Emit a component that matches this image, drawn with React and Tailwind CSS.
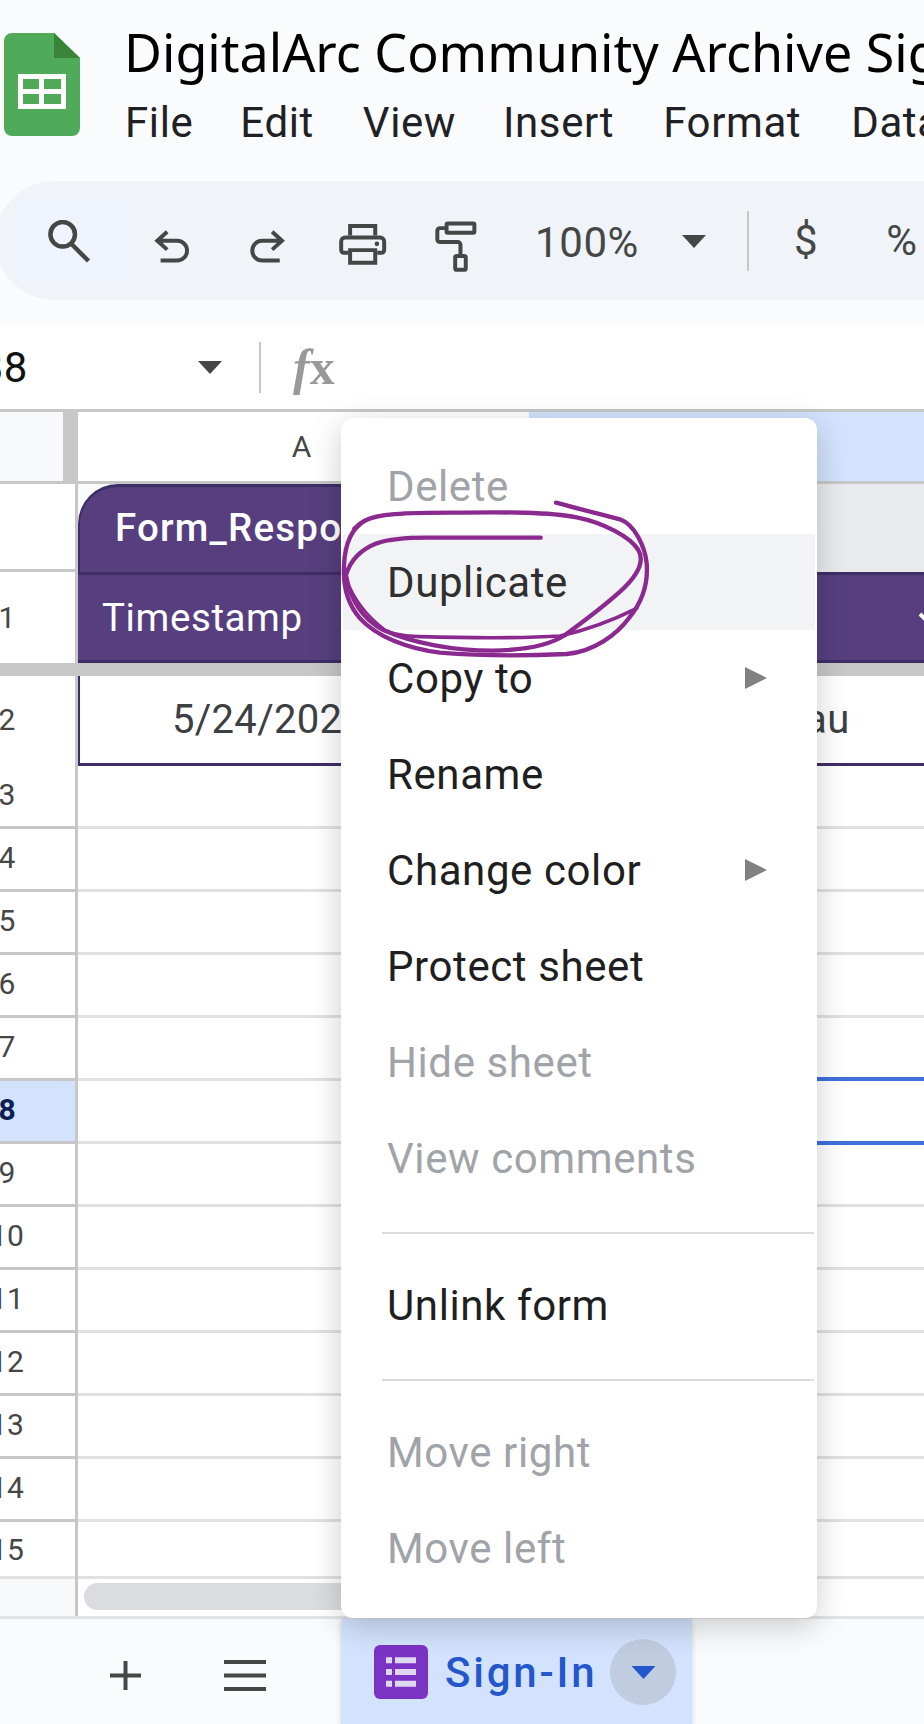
const menuItems = [
  { label: "Delete", off: true },
  { label: "Duplicate", hover: true },
  { label: "Copy to", sub: true },
  { label: "Rename" },
  { label: "Change color", sub: true },
  { label: "Protect sheet" },
  { label: "Hide sheet", off: true },
  { label: "View comments", off: true },
  { sep: true },
  { label: "Unlink form" },
  { sep: true },
  { label: "Move right", off: true },
  { label: "Move left", off: true },
];

const menus = [
  { label: "File", gap: "ml-0" },
  { label: "Edit", gap: "ml-[47px]" },
  { label: "View", gap: "ml-[49px]" },
  { label: "Insert", gap: "ml-[47px]" },
  { label: "Format", gap: "ml-[49px]" },
  { label: "Data", gap: "ml-[50px]" },
];

const rows = [3, 4, 5, 6, 7, 8, 9, 10, 11, 12, 13, 14];

const Caret = ({ className }) => (
  <svg viewBox="0 0 24 13" className={className}>
    <path d="M0 0H24L12 13Z" fill="currentColor" />
  </svg>
);

const SheetsLogo = () => (
  <svg viewBox="0 0 76 103" className="w-[76px] h-[103px] shrink-0 ml-[4px] mt-[2px]">
    <path d="M8 0H50L76 25V95a8 8 0 0 1-8 8H8a8 8 0 0 1-8-8V8a8 8 0 0 1 8-8Z" fill="#4fab5a" />
    <path d="M50 0L76 25H50Z" fill="#3a8439" />
    <path d="M14 41H62V76H14Z" fill="#fff" />
    <path d="M19 46H35V56H19ZM40 46H57V56H40ZM19 61H35V71H19ZM40 61H57V71H40Z" fill="#4fab5a" />
  </svg>
);

const SearchIcon = () => (
  <svg viewBox="0 0 44 44" className="w-[44px] h-[44px]" fill="none" stroke="#444746" strokeWidth="4.5">
    <circle cx="15.7" cy="14.3" r="12.3" />
    <path d="M24 23.5L41.5 41" />
  </svg>
);

const UndoIcon = () => (
  <svg viewBox="365 70 115 102" className="w-[38px] h-[34px]" fill="none" stroke="#444746" strokeWidth="12">
    <path d="M408 78L378 105L408 132M378 105H438A30 30 0 0 1 438 165H388" />
  </svg>
);

const RedoIcon = () => (
  <svg viewBox="655 70 115 102" className="w-[38px] h-[34px]" fill="none" stroke="#444746" strokeWidth="12">
    <path d="M725 78L755 105L725 132M755 105H695A30 30 0 0 0 695 165H748" />
  </svg>
);

const PrintIcon = () => (
  <svg viewBox="25 22 150 130" className="w-[50px] h-[43px]" fill="none" stroke="#444746" strokeWidth="12">
    <path d="M61 60V31H137V60" />
    <path d="M55 112H42a8 8 0 0 1-8-8V78a12 12 0 0 1 12-12H152a12 12 0 0 1 12 12V104a8 8 0 0 1-8 8H143" />
    <path d="M61 104H137V142H61Z" />
    <circle cx="142" cy="85" r="7" fill="#444746" stroke="none" />
  </svg>
);

const PaintIcon = () => (
  <svg viewBox="315 12 130 156" className="w-[43px] h-[52px]" fill="none" stroke="#444746" strokeWidth="12">
    <rect x="350" y="22" width="84" height="28" rx="3" />
    <path d="M350 36H330a8 8 0 0 0-8 8V70a8 8 0 0 0 8 8H384a8 8 0 0 1 8 8V118" />
    <rect x="376" y="120" width="32" height="42" rx="5" />
  </svg>
);

const FormIcon = () => (
  <svg viewBox="0 0 162 162" className="w-[54px] h-[54px] shrink-0">
    <rect width="162" height="162" rx="18" fill="#7b33c4" />
    <path d="M36 37H54V55H36ZM63 37H126V55H63ZM36 72H54V90H36ZM63 72H126V90H63ZM36 107H54V125H36ZM63 107H126V125H63Z" fill="#dfd6f2" />
  </svg>
);

const Scribble = () => (
  <svg viewBox="0 0 1020 600" className="absolute left-[320px] top-[480px] w-[340px] h-[200px]" fill="none" stroke="#8b2a8e" strokeWidth="13" strokeLinecap="round" strokeLinejoin="round">
    <path d="M708 68C770 85 850 105 900 118C945 135 975 200 980 250C985 310 970 360 930 410C890 465 820 515 740 522C620 528 480 528 360 518C260 505 170 470 120 415C85 375 68 320 72 255C75 190 95 145 135 122C170 102 250 98 400 98C560 96 690 96 770 112C850 128 930 170 955 210C975 245 950 290 900 335C850 380 790 425 735 465" />
    <path d="M735 465C690 495 620 510 520 512C400 512 280 490 190 450C130 420 90 360 78 285C90 245 120 210 170 190C205 178 250 173 320 173H662" />
    <path d="M175 440C200 460 240 468 300 470C450 474 620 474 720 468C800 450 880 420 950 385" strokeWidth="11" />
    <path d="M80 300C100 350 130 400 190 445M100 145C120 125 140 115 165 110" strokeWidth="8" />
  </svg>
);

const RowNum = ({ n, selected }) => (
  <div className={`w-[75px] shrink-0 h-full border-b-[3px] border-[#c7c7c7] flex items-center pb-[3px] ${selected ? "bg-[#d3e3fd] font-bold text-[#0b1f55]" : "bg-white text-[#444746]"}`}>
    <div className="w-[14px] flex justify-center whitespace-nowrap">{n}</div>
  </div>
);

const App = () => {
  return (
    <div className="relative w-[924px] h-[1724px] overflow-hidden bg-[#f9fbfd] font-[Roboto,sans-serif] text-[42px] tracking-[0.6px] text-[#1f1f1f]">
      {/* Title + menu bar */}
      <div className="h-[181px] pt-[31px] flex items-start">
        <SheetsLogo />
        <div className="ml-[44px] whitespace-nowrap">
          <div className="text-[52px] tracking-normal leading-[42px] text-black font-['Noto_Sans',sans-serif]">DigitalArc Community Archive Sign-In</div>
          <div className="mt-[28px] ml-[1px] flex leading-[44px] text-[#1f2124]">
            {menus.map((m) => (
              <span key={m.label} className={m.gap}>{m.label}</span>
            ))}
          </div>
        </div>
      </div>

      {/* Toolbar */}
      <div className="h-[119px] w-[960px] -ml-[5px] rounded-l-[60px] bg-[#f0f4f9] flex items-start text-[#444746] whitespace-nowrap">
        <div className="ml-[21px] mt-[18px] w-[112px] h-[84px] bg-[#eff3fb] pl-[31px] pt-[21px]">
          <SearchIcon />
        </div>
        <div className="ml-[25px] mt-[48px]"><UndoIcon /></div>
        <div className="ml-[58px] mt-[48px]"><RedoIcon /></div>
        <div className="ml-[51px] mt-[42px]"><PrintIcon /></div>
        <div className="ml-[47px] mt-[39px]"><PaintIcon /></div>
        <div className="ml-[57px] mt-[40px] leading-[44px]">100%</div>
        <div className="ml-[43px] mt-[54px]"><Caret className="w-[24px] h-[13px] text-[#444746]" /></div>
        <div className="ml-[41px] mt-[30px] w-[2px] h-[60px] bg-[#c7c7c7]" />
        <div className="ml-[45px] mt-[38px] leading-[44px]">$</div>
        <div className="ml-[68px] mt-[38px] leading-[44px]">%</div>
      </div>
      <div className="h-[25px]" />

      {/* Formula bar */}
      <div className="h-[87px] bg-white border-b-[3px] border-[#c7c7c7] flex items-center whitespace-nowrap">
        <div className="w-[200px] -ml-[23px] text-[#111] shrink-0">B8</div>
        <Caret className="ml-[21px] w-[24px] h-[13px] text-[#444746] shrink-0" />
        <div className="ml-[37px] w-[2px] h-[51px] bg-[#c7c7c7]" />
        <div className="ml-[32px] font-['Liberation_Serif',serif] text-[50px] tracking-normal text-[#999] leading-none">
          <span className="italic font-bold">f</span><span className="font-bold">x</span>
        </div>
      </div>

      {/* Column headers */}
      <div className="h-[72px] flex border-b-[3px] border-[#c7c7c7] text-[30px] tracking-normal text-[#444746]">
        <div className="w-[63px] bg-[#f8f9fa]" />
        <div className="w-[15px] bg-[#c7c7c7]" />
        <div className="w-[451px] bg-white flex justify-center items-center pr-[4px]">A</div>
        <div className="flex-1 bg-[#d3e3fd]" />
      </div>

      {/* Table band */}
      <div className="h-[88px] flex">
        <div className="w-[75px] border-r-[3px] box-content border-[#c7c7c7] border-b-[3px] bg-white" />
        <div className="w-[320px] rounded-tl-[40px] bg-[#573f7f] border-t-[3px] border-l-[2px] border-[#3f2d66] text-white text-[38.5px] font-medium tracking-[1.2px] pl-[35px] pt-[19px] whitespace-nowrap leading-[44px]">Form_Responses</div>
        <div className="flex-1 bg-[#e8eaed]" />
      </div>

      {/* Row 1 */}
      <div className="h-[91px] flex">
        <div className="w-[78px] shrink-0 border-r-[3px] border-[#c7c7c7] bg-white flex items-center text-[30px] tracking-normal text-[#444746]">
          <div className="w-[14px] flex justify-center">1</div>
        </div>
        <div className="flex-1 bg-[#573f7f] border-y-[3px] border-[#3f2d66] text-white text-[38.5px] pl-[24px] flex items-center justify-between whitespace-nowrap overflow-hidden">
          <span>Timestamp</span>
          <svg viewBox="0 0 20 12" className="w-[20px] h-[12px] -mr-[14px]" fill="none" stroke="#fff" strokeWidth="4">
            <path d="M2 2L10 10L18 2" />
          </svg>
        </div>
      </div>
      <div className="h-[13px] bg-[#c7c7c7]" />

      {/* Row 2 */}
      <div className="h-[90px] flex bg-white">
        <div className="w-[78px] shrink-0 border-r-[3px] border-[#c7c7c7] flex items-center pb-[4px] text-[30px] tracking-normal text-[#444746]">
          <div className="w-[14px] flex justify-center">2</div>
        </div>
        <div className="flex-1 border-l-[2px] border-b-[3px] border-[#3f2d66] flex items-center text-[40px] tracking-[0.3px] text-[#3c4043] whitespace-nowrap">
          <span className="ml-[92px]">5/24/2024</span>
          <span className="ml-[440px]">au</span>
        </div>
      </div>

      {/* Empty rows */}
      <div className="bg-white text-[30px] tracking-normal">
        {rows.map((n) => (
          <div key={n} className="relative h-[63px] flex">
            <RowNum n={n} selected={n === 8} />
            <div className="w-[3px] bg-[#c7c7c7]" />
            <div className="flex-1 border-b-[3px] border-[#e1e1e1]" />
            {n === 8 && <div className="absolute left-[529px] right-0 -top-[4px] -bottom-[1px] border-y-[4px] border-[#3f70d9]" />}
          </div>
        ))}
        <div className="h-[57px] flex">
          <div className="w-[75px] shrink-0 h-full border-b-[3px] border-[#e1e1e1] flex items-center text-[#444746]">
            <div className="w-[14px] flex justify-center whitespace-nowrap">15</div>
          </div>
          <div className="w-[3px] bg-[#c7c7c7]" />
          <div className="flex-1 border-b-[3px] border-[#e1e1e1]" />
        </div>
        <div className="h-[37px] flex">
          <div className="w-[75px] bg-[#f8f9fa]" />
          <div className="w-[3px] bg-[#c7c7c7]" />
          <div className="ml-[6px] mt-[4px] w-[400px] h-[27px] rounded-full bg-[#dadce0]" />
        </div>
      </div>
      <div className="h-[3px] bg-[#e1e3e6]" />

      {/* Sheet tabs */}
      <div className="h-[106px] flex items-start bg-[#f9fbfd]">
        <svg viewBox="0 0 31 29" className="ml-[110px] mt-[42px] w-[31px] h-[29px]" fill="none" stroke="#444746" strokeWidth="4">
          <path d="M0 14.5H31M15.5 0V29" />
        </svg>
        <svg viewBox="0 0 42 32" className="ml-[83px] mt-[41px] w-[42px] h-[32px]" fill="none" stroke="#444746" strokeWidth="4">
          <path d="M0 2H42M0 15.5H42M0 29H42" />
        </svg>
        <div className="ml-[75px] w-[351px] h-full bg-[#d3e3fd] flex items-center pl-[33px] shadow-[0_2px_6px_rgba(0,0,0,0.15)]">
          <FormIcon />
          <span className="ml-[17px] font-medium tracking-[2.8px] text-[#2456cc]">Sign-In</span>
          <div className="ml-[13px] w-[66px] h-[66px] rounded-full bg-[#c0cde0] flex items-center justify-center">
            <Caret className="w-[25px] h-[13px] text-[#2456cc]" />
          </div>
        </div>
      </div>

      {/* Sheet context menu */}
      <div className="absolute left-[341px] top-[418px] w-[476px] h-[1200px] pt-[20px] bg-white rounded-[12px] shadow-[0_8px_32px_rgba(0,0,0,0.2)]">
        {menuItems.map((item, i) =>
          item.sep ? (
            <div key={i} className="mt-[26px] mb-[23px] ml-[41px] mr-[3px] h-[2px] bg-[#dadce0]" />
          ) : (
            <div key={i} className={`h-[96px] mx-[2px] pl-[44px] pr-[48px] flex items-center justify-between ${item.hover ? "bg-[#f1f3f4] text-[#2f2f2f]" : ""} ${item.off ? "text-[#a0a4a8]" : ""}`}>
              <span>{item.label}</span>
              {item.sub && (
                <svg viewBox="0 0 22 22" className="w-[22px] h-[22px]">
                  <path d="M0 0L22 11L0 22Z" fill="#808080" />
                </svg>
              )}
            </div>
          )
        )}
      </div>
      <Scribble />
    </div>
  );
};

export default App;
